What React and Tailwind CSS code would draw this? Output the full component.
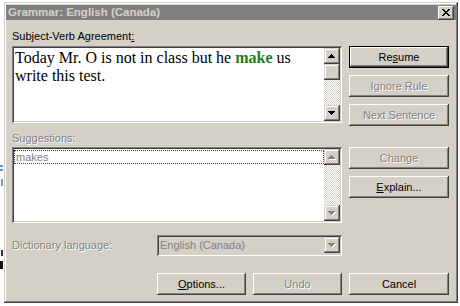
import React from "react";

const raised =
  "bg-[#d4d0c8] shadow-[inset_-1px_-1px_#404040,inset_1px_1px_#fff,inset_-2px_-2px_#808080,inset_2px_2px_#d4d0c8]";
const sunken =
  "p-[2px] shadow-[inset_1px_1px_#808080,inset_-1px_-1px_#fff,inset_2px_2px_#404040,inset_-2px_-2px_#d4d0c8]";
const dimText = "text-[#808080] [text-shadow:1px_1px_0_#fff]";

// classic 7x4 arrow, drawn row by row
const Arrow = ({ up, disabled }) => {
  const rows = up ? [[3, 1], [2, 3], [1, 5], [0, 7]] : [[0, 7], [1, 5], [2, 3], [3, 1]];
  return (
    <svg width="8" height="5" viewBox="0 0 8 5" shapeRendering="crispEdges">
      {disabled &&
        rows.map(([x, w], i) => <rect key={"s" + i} x={x + 1} y={i + 1} width={w} height="1" fill="#fff" />)}
      {rows.map(([x, w], i) => (
        <rect key={i} x={x} y={i} width={w} height="1" fill={disabled ? "#808080" : "#000"} />
      ))}
    </svg>
  );
};

const ScrollBtn = ({ up, disabled }) => (
  <div className="w-[16px] h-[16px] shrink-0 bg-[#d4d0c8] shadow-[inset_-1px_-1px_#404040,inset_1px_1px_#d4d0c8,inset_-2px_-2px_#808080,inset_2px_2px_#fff] flex items-center justify-center">
    <Arrow up={up} disabled={disabled} />
  </div>
);

const Track = () => (
  <div className="flex-1 bg-[image:repeating-conic-gradient(#fff_0_25%,#d4d0c8_0_50%)] bg-[length:2px_2px]" />
);

const Button = ({ children, disabled, def, className }) => (
  <div
    className={
      "h-[22px] flex items-center justify-center text-[11px] " +
      raised +
      " " +
      (def ? "border border-black " : "") +
      (disabled ? dimText + " " : "text-black ") +
      className
    }
  >
    {children}
  </div>
);

export default function App() {
  return (
    <div className="w-[460px] h-[306px] bg-white flex font-['Liberation_Sans',Arial,sans-serif] overflow-hidden">
      {/* bits of the page behind the dialog */}
      <div className="w-[4px] flex flex-col">
        <div className="mt-[165px] h-[2px] w-[3px] bg-[#6a8fb8]" />
        <div className="mt-[2px] h-[2px] w-[3px] bg-[#6a8fb8]" />
        <div className="mt-[8px] h-[7px] w-[2px] ml-[1px] bg-[#7a9ac0]" />
        <div className="mt-[64px] h-[6px] w-[2px] ml-[1px] bg-[#333]" />
        <div className="mt-[5px] h-[8px] w-[3px] bg-[#111]" />
      </div>

      <div
        className={
          "mt-[2px] w-[454px] h-[301px] flex flex-col " +
          "bg-[#d4d0c8] shadow-[inset_-1px_-1px_#404040,inset_1px_1px_#d4d0c8,inset_-2px_-2px_#808080,inset_2px_2px_#fff]"
        }
      >
        {/* title bar */}
        <div className="mt-[3px] mx-[2px] h-[15px] bg-[#808080] flex items-center justify-between pl-[2px] pr-[2px]">
          <span className="text-[11.5px] font-bold text-[#d4d0c8] leading-none">Grammar: English (Canada)</span>
          <div className={"w-[16px] h-[14px] flex items-center justify-center " + raised}>
            <svg width="8" height="7" viewBox="0 0 8 7" shapeRendering="crispEdges">
              <path d="M0 0h2v1h-2zM6 0h2v1h-2zM1 1h2v1h-2zM5 1h2v1h-2zM2 2h4v1h-4zM3 3h2v1h-2zM2 4h4v1h-4zM1 5h2v1h-2zM5 5h2v1h-2zM0 6h2v1h-2zM6 6h2v1h-2z" fill="#000" />
            </svg>
          </div>
        </div>

        <div className="pl-[8px] pr-[9px] flex flex-col">
          <div className="mt-[6px] flex gap-[7px]">
            {/* left column */}
            <div className="w-[330px] flex flex-col">
              <div className="h-[20px] leading-[20px] text-[11px] text-black">
                Subject-Verb Agreement<span className="underline">:</span>
              </div>
              <div className={"h-[77px] bg-white flex " + sunken}>
                <div className="flex-1 pl-[1px] pt-[1px] text-[16px] leading-[18px] text-black font-['Liberation_Serif','Times_New_Roman',serif]">
                  <div>
                    <span>Today Mr. O is not in class but he </span>
                    <b className="text-[#1e7b1e]">make</b>
                    <span> us</span>
                  </div>
                  <div>write this test.</div>
                </div>
                <div className="w-[16px] flex flex-col bg-[#d4d0c8]">
                  <ScrollBtn up />
                  <div className="w-[16px] h-[16px] shrink-0 bg-[#d4d0c8] shadow-[inset_-1px_-1px_#404040,inset_1px_1px_#d4d0c8,inset_-2px_-2px_#808080,inset_2px_2px_#fff]" />
                  <Track />
                  <ScrollBtn />
                </div>
              </div>

              <div className={"h-[24px] pt-[8px] leading-[14px] text-[11px] " + dimText}>Suggestions:</div>
              <div className={"h-[76px] bg-white flex " + sunken}>
                <div className="flex-1 pt-[1px]">
                  <div className="h-[14px] border border-dotted border-[#444] text-[11px] leading-[12px] text-[#808080] pl-[1px]">
                    makes
                  </div>
                </div>
                <div className="w-[16px] flex flex-col bg-[#d4d0c8]">
                  <ScrollBtn up disabled />
                  <Track />
                  <ScrollBtn disabled />
                </div>
              </div>
            </div>

            {/* right column */}
            <div className="w-[100px] flex flex-col pt-[20px]">
              <Button def className="w-[100px]">
                <span>
                  Re<span className="underline">s</span>ume
                </span>
              </Button>
              <Button disabled className="w-[100px] mt-[7px]">Ignore Rule</Button>
              <Button disabled className="w-[100px] mt-[7px]">Next Sentence</Button>
              <Button disabled className="w-[100px] mt-[21px]">Change</Button>
              <Button className="w-[100px] mt-[7px]">
                <span>
                  <span className="underline">E</span>xplain...
                </span>
              </Button>
            </div>
          </div>

          {/* dictionary row */}
          <div className="mt-[12px] h-[21px] flex items-center">
            <div className={"w-[145px] text-[11px] " + dimText}>Dictionary language:</div>
            <div className={"w-[185px] h-[21px] flex bg-[#d4d0c8] " + sunken}>
              <div className="flex-1 text-[11px] leading-[17px] text-[#808080] pl-[1px]">English (Canada)</div>
              <ScrollBtn disabled />
            </div>
          </div>

          {/* bottom buttons */}
          <div className="mt-[17px] flex justify-end gap-[7px]">
            <Button className="w-[89px]">
              <span>
                <span className="underline">O</span>ptions...
              </span>
            </Button>
            <Button disabled className="w-[89px]">Undo</Button>
            <Button className="w-[100px]">Cancel</Button>
          </div>
        </div>
      </div>
    </div>
  );
}
